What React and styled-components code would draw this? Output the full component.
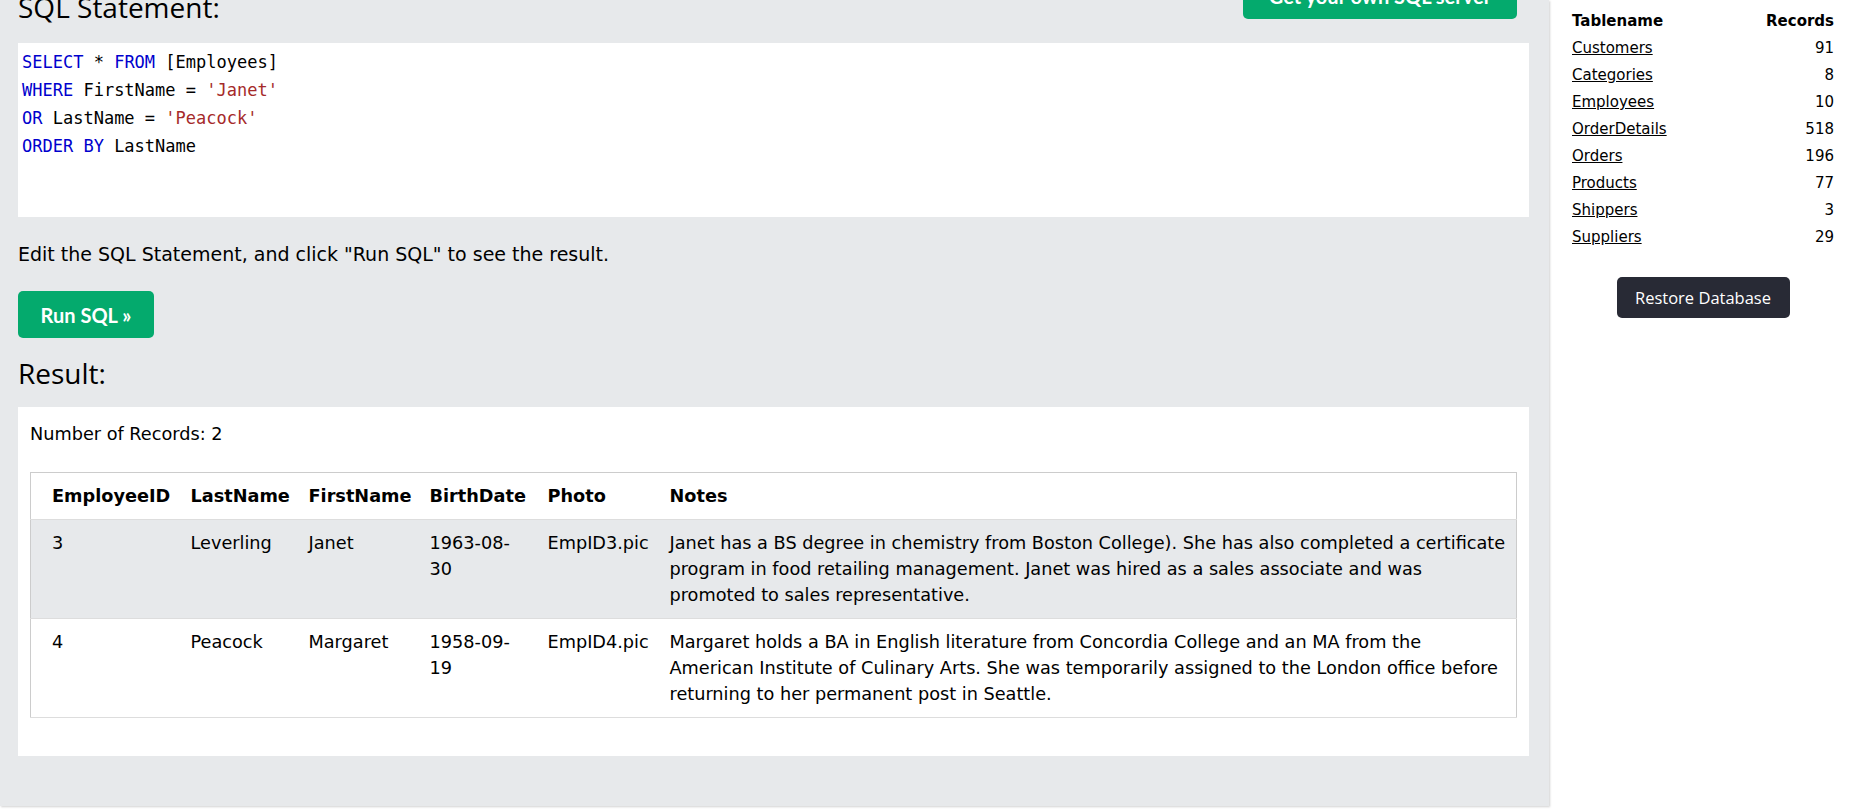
import React from 'react'
import styled, { createGlobalStyle } from 'styled-components'

const GlobalStyle = createGlobalStyle`
  html, body {
    margin: 0;
    padding: 0;
    background: #ffffff;
    overflow: hidden;
  }
  body {
    font-family: "DejaVu Sans", Verdana, sans-serif;
    color: #000000;
  }
`

const Page = styled.div`
  display: flex;
  width: 1854px;
  height: 809px;
  overflow: hidden;
`

const Main = styled.div`
  width: 1549px;
  height: 806px;
  flex-shrink: 0;
  box-sizing: border-box;
  padding: 0 20px 0 18px;
  background: #e7e9eb;
  box-shadow: 1px 1px 2px rgba(0, 0, 0, 0.18);
  display: flex;
  flex-direction: column;
`

const HeaderRow = styled.div`
  display: flex;
  justify-content: space-between;
  align-items: flex-end;
  height: 49px;
  margin-top: -30px;
  padding-right: 12px;
`

const Heading = styled.h2`
  margin: 0 0 ${(p) => p.$drop || 0}px 0;
  font-family: "Open Sans", "Noto Sans", sans-serif;
  font-weight: 400;
  font-size: 28px;
  line-height: 28px;
  color: #000;
`

const GreenButton = styled.button`
  display: flex;
  align-items: center;
  justify-content: center;
  box-sizing: border-box;
  border: none;
  border-radius: 5px;
  background: #04aa6d;
  color: #ffffff;
  font-family: Lato, "Open Sans", sans-serif;
  font-weight: 700;
  font-size: 20px;
  width: ${(p) => p.$w}px;
  height: ${(p) => p.$h}px;
  padding: ${(p) => p.$top || 0}px 0 0;
  cursor: pointer;
`

const CodeBox = styled.div`
  margin-top: 24px;
  height: 174px;
  box-sizing: border-box;
  background: #ffffff;
  padding: 5px 4px;
  font-family: "DejaVu Sans Mono", "Liberation Mono", monospace;
  font-size: 17px;
  line-height: 28px;
  color: #000;
`

const CodeLine = styled.div`
  white-space: pre;
`

const Kw = styled.span`
  color: #0000cd;
`

const Str = styled.span`
  color: #a52a2a;
`

const Hint = styled.p`
  margin: 24px 0 24px;
  font-size: 19px;
  line-height: 26px;
`

const ResultHeading = styled(Heading)`
  margin-top: 21px;
`

const ResultBox = styled.div`
  margin-top: 20px;
  background: #ffffff;
  padding: 14px 12px 38px;
`

const RecordCount = styled.div`
  font-size: 17.7px;
  line-height: 26px;
  margin-bottom: 25px;
`

const Table = styled.table`
  width: 100%;
  table-layout: fixed;
  border-collapse: collapse;
  border: 1px solid #cccccc;
  font-size: 17.7px;
  line-height: 26px;
`

const Row = styled.tr`
  background: ${(p) => (p.$shade ? '#e7e9eb' : '#ffffff')};
  border-bottom: 1px solid #dddddd;
`

const Th = styled.th`
  text-align: left;
  vertical-align: top;
  font-weight: 700;
  padding: 10px;
  &:first-child {
    padding-left: 21px;
  }
  &:last-child {
    padding-right: 8px;
  }
`

const Td = styled.td`
  vertical-align: top;
  padding: 10px;
  &:first-child {
    padding-left: 21px;
  }
  &:last-child {
    padding-right: 8px;
  }
`

const Sidebar = styled.aside`
  flex: 1;
  box-sizing: border-box;
  padding: 8px 20px 0 23px;
  display: flex;
  flex-direction: column;
  align-items: center;
`

const TableList = styled.div`
  width: 100%;
  display: grid;
  grid-template-columns: 1fr auto;
  font-size: 15px;
  line-height: 27px;
`

const ListHead = styled.div`
  font-weight: 700;
  text-align: ${(p) => (p.$right ? 'right' : 'left')};
`

const ListLink = styled.a`
  color: #000;
  text-decoration: underline;
  justify-self: start;
`

const ListCount = styled.div`
  text-align: right;
`

const RestoreButton = styled.button`
  margin-top: 26px;
  width: 173px;
  height: 41px;
  border: none;
  border-radius: 5px;
  background: #282a35;
  color: #ffffff;
  font-family: "Open Sans", "Noto Sans", sans-serif;
  font-size: 16.5px;
  cursor: pointer;
`

const columns = [
  { name: 'EmployeeID', width: 150 },
  { name: 'LastName', width: 118 },
  { name: 'FirstName', width: 121 },
  { name: 'BirthDate', width: 118 },
  { name: 'Photo', width: 122 },
  { name: 'Notes' },
]

const employees = [
  {
    id: 3,
    last: 'Leverling',
    first: 'Janet',
    birth: '1963-08-30',
    photo: 'EmpID3.pic',
    notes:
      'Janet has a BS degree in chemistry from Boston College). She has also completed a certificate program in food retailing management. Janet was hired as a sales associate and was promoted to sales representative.',
  },
  {
    id: 4,
    last: 'Peacock',
    first: 'Margaret',
    birth: '1958-09-19',
    photo: 'EmpID4.pic',
    notes:
      'Margaret holds a BA in English literature from Concordia College and an MA from the American Institute of Culinary Arts. She was temporarily assigned to the London office before returning to her permanent post in Seattle.',
  },
]

const tables = [
  ['Customers', 91],
  ['Categories', 8],
  ['Employees', 10],
  ['OrderDetails', 518],
  ['Orders', 196],
  ['Products', 77],
  ['Shippers', 3],
  ['Suppliers', 29],
]

const App = () => {
  return (
    <Page>
      <GlobalStyle />
      <Main>
        <HeaderRow>
          <Heading $drop={-2}>SQL Statement:</Heading>
          <GreenButton $w={274} $h={49} $top={2}>Get your own SQL server</GreenButton>
        </HeaderRow>

        <CodeBox>
          <CodeLine><Kw>SELECT</Kw> * <Kw>FROM</Kw> [Employees]</CodeLine>
          <CodeLine><Kw>WHERE</Kw> FirstName = <Str>'Janet'</Str></CodeLine>
          <CodeLine><Kw>OR</Kw> LastName = <Str>'Peacock'</Str></CodeLine>
          <CodeLine><Kw>ORDER BY</Kw> LastName</CodeLine>
        </CodeBox>

        <Hint>Edit the SQL Statement, and click "Run SQL" to see the result.</Hint>

        <div>
          <GreenButton $w={136} $h={47}>Run SQL »</GreenButton>
        </div>

        <ResultHeading>Result:</ResultHeading>

        <ResultBox>
          <RecordCount>Number of Records: 2</RecordCount>
          <Table>
            <colgroup>
              {columns.map((c) => (
                <col key={c.name} style={c.width ? { width: c.width } : undefined} />
              ))}
            </colgroup>
            <thead>
              <Row>
                {columns.map((c) => (
                  <Th key={c.name}>{c.name}</Th>
                ))}
              </Row>
            </thead>
            <tbody>
              {employees.map((e, i) => (
                <Row key={e.id} $shade={i % 2 === 0}>
                  <Td>{e.id}</Td>
                  <Td>{e.last}</Td>
                  <Td>{e.first}</Td>
                  <Td>{e.birth}</Td>
                  <Td>{e.photo}</Td>
                  <Td>{e.notes}</Td>
                </Row>
              ))}
            </tbody>
          </Table>
        </ResultBox>
      </Main>

      <Sidebar>
        <TableList>
          <ListHead>Tablename</ListHead>
          <ListHead $right>Records</ListHead>
          {tables.map(([name, count]) => (
            <React.Fragment key={name}>
              <ListLink href="#">{name}</ListLink>
              <ListCount>{count}</ListCount>
            </React.Fragment>
          ))}
        </TableList>
        <RestoreButton>Restore Database</RestoreButton>
      </Sidebar>
    </Page>
  )
}

export default App
